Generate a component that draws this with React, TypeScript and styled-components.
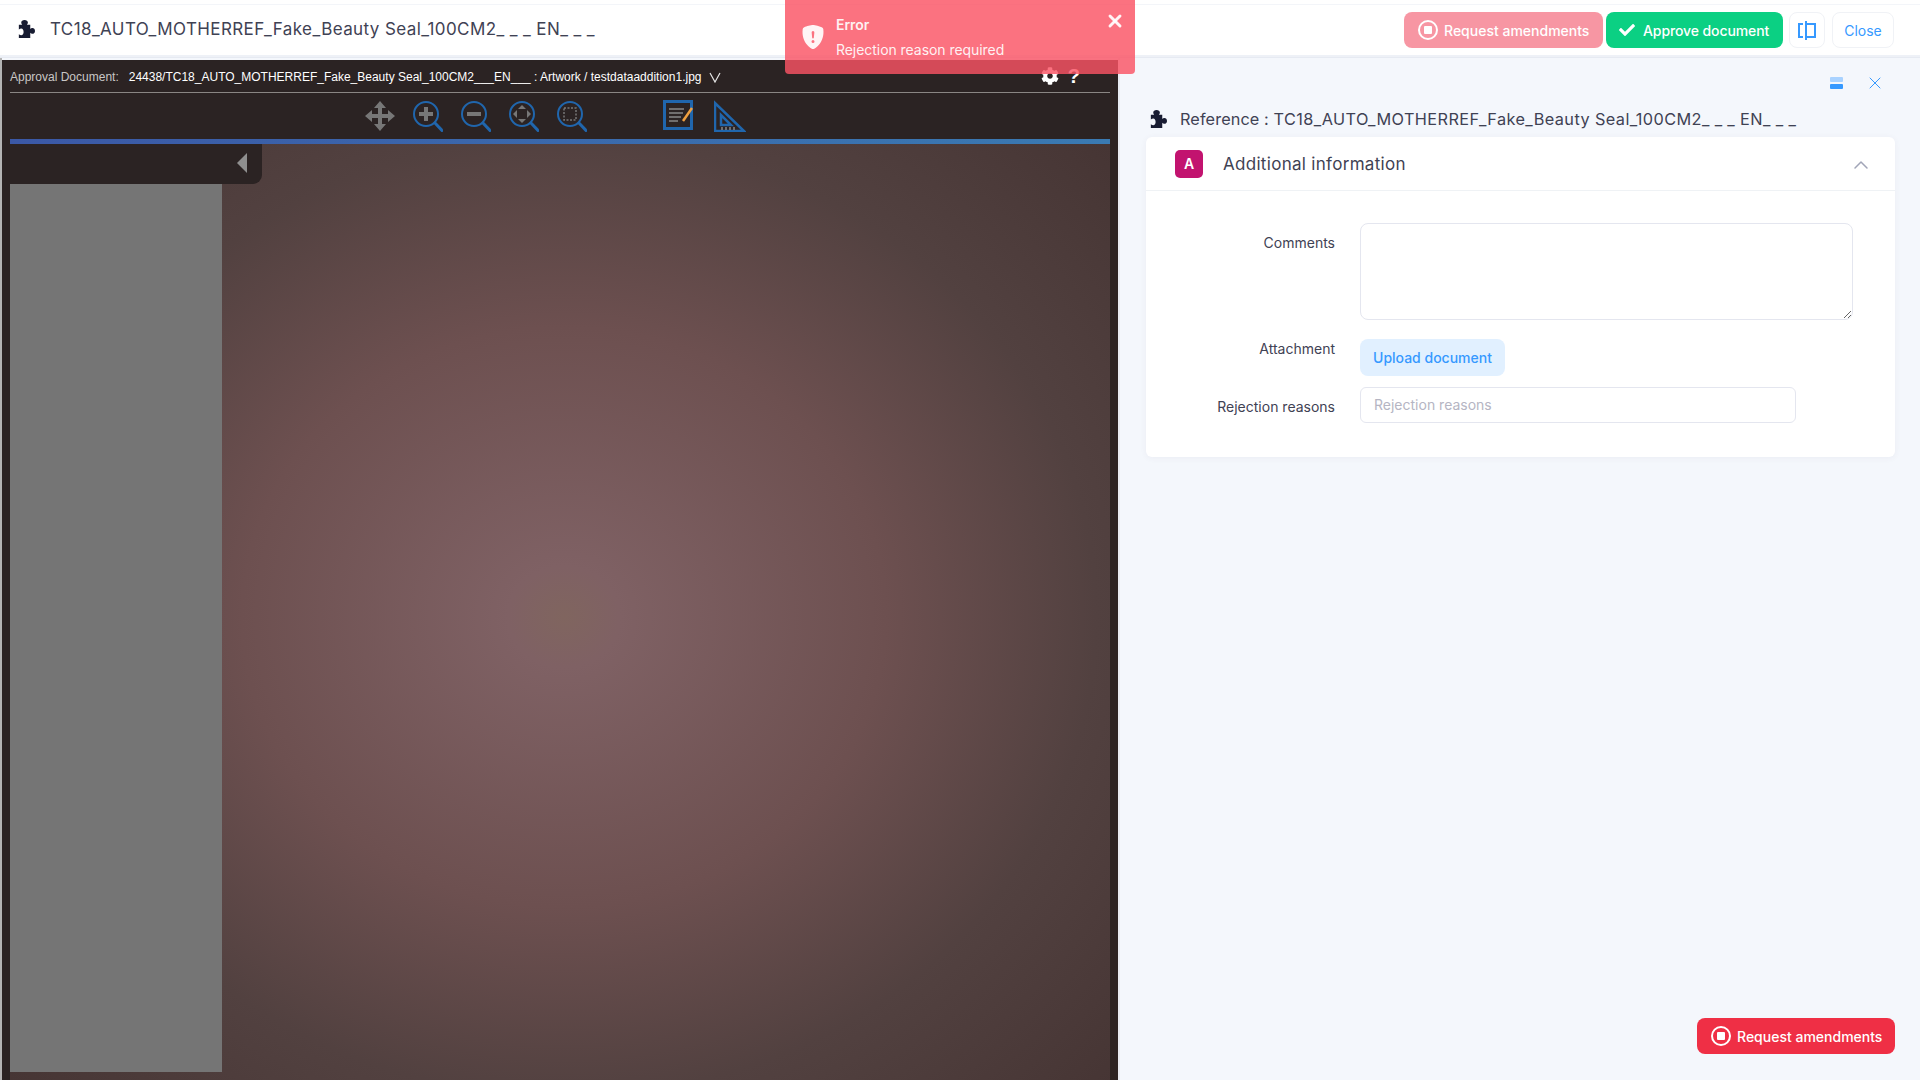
import type { ReactNode } from "react";
import styled, { createGlobalStyle } from "styled-components";
import { BsShieldFillExclamation } from "react-icons/bs";
import { FaCheck, FaCog } from "react-icons/fa";
import { FiChevronUp, FiX } from "react-icons/fi";

const GlobalStyle = createGlobalStyle`
  html, body { margin: 0; padding: 0; }
  body { font-family: Inter, "Open Sans", sans-serif; color: #3f4254; overflow: hidden; }
  * { box-sizing: border-box; }
`;

const Page = styled.div`
  position: relative;
  width: 1920px;
  height: 1080px;
  display: flex;
  flex-direction: column;
  background: #f4f7fc;
  overflow: hidden;
`;

const Header = styled.header`
  height: 58px;
  flex: none;
  display: flex;
  align-items: center;
  justify-content: space-between;
  padding: 6px 26px 3px 16px;
  background: linear-gradient(#fff 4px, #f3f5f9 4px, #f3f5f9 5px, #fff 5px, #fff 55px, #eef1f7 55px);
  border-bottom: 1px solid #e6eaf2;
`;

const TitleGroup = styled.div`
  display: flex;
  align-items: center;
  gap: 15px;
  padding-bottom: 2px;
`;

const TitleText = styled.span<{ $size: number }>`
  font-size: ${(p) => p.$size}px;
  color: #3f4254;
  white-space: pre;
  letter-spacing: 0.4px;
`;

const TitlePrefix = styled.span`
  letter-spacing: 0.1px;
`;

const Blanks = styled.span`
  letter-spacing: 0.325em;
`;

const Actions = styled.div`
  display: flex;
  align-items: center;
`;

const ColorButton = styled.button<{ $bg: string; $w: number; $faded?: boolean; $pad: number }>`
  height: 36px;
  width: ${(p) => p.$w}px;
  display: flex;
  align-items: center;
  gap: 5px;
  padding: 0 0 0 ${(p) => p.$pad}px;
  border: 0;
  border-radius: 8px;
  background: ${(p) => p.$bg};
  opacity: ${(p) => (p.$faded ? 0.5 : 1)};
  color: #fff;
  font: 500 14px Inter, sans-serif;
  white-space: nowrap;
`;

const ApproveButton = styled(ColorButton)`
  margin-left: 3px;
  gap: 8px;
  letter-spacing: -0.1px;
`;

const OutlineButton = styled.button<{ $w: number; $gap: number }>`
  height: 36px;
  width: ${(p) => p.$w}px;
  margin-left: ${(p) => p.$gap}px;
  display: flex;
  align-items: center;
  justify-content: center;
  padding: 0;
  background: #fff;
  border: 1px solid #f0f2f6;
  border-radius: 8px;
  color: #3699ff;
  font: 400 14px Inter, sans-serif;
`;

const Workspace = styled.div`
  flex: 1;
  min-height: 0;
  display: flex;
`;

const ViewerColumn = styled.div`
  width: 1120px;
  flex: none;
  padding: 2px 0 0 2px;
  display: flex;
  background: linear-gradient(90deg, #b4b4b4 2px, transparent 2px);
  border-right: 2px solid #e7ebf3;
`;

const Viewer = styled.section`
  flex: 1;
  display: flex;
  flex-direction: column;
  padding: 0 8px;
  background: #2b2323;
`;

const DocBar = styled.div`
  height: 33px;
  flex: none;
  display: flex;
  align-items: center;
  padding-top: 2px;
  border-bottom: 1px solid #8a8684;
  font: 12px "Liberation Sans", Arial, sans-serif;
  color: #c9c7c6;
`;

const DocValue = styled.span`
  margin: 0 7px 0 10px;
  color: #fff;
  white-space: pre;
`;

const DocTools = styled.div`
  margin: -2px 30px 0 auto;
  display: flex;
  align-items: center;
  gap: 9px;
  color: #fff;
  font-size: 20px;
  font-weight: 700;
`;

const Toolbar = styled.div`
  height: 46px;
  flex: none;
  display: flex;
  align-items: center;
  gap: 18px;
  padding-left: 355px;
`;

const NoteSlot = styled.span`
  margin-left: 58px;
  display: flex;
  gap: 21px;
`;

const ProgressLine = styled.div`
  height: 5px;
  flex: none;
  background: linear-gradient(90deg, #3b58a6, #3a7ab2);
`;

const Stage = styled.div`
  flex: 1;
  min-height: 0;
  background: radial-gradient(
    ellipse 700px 630px at 554px 473px,
    #80655f 0%,
    #7f6164 8%,
    #6d5050 46%,
    #524140 76%,
    #463534 108%
  );
`;

const ThumbTab = styled.div`
  width: 252px;
  height: 40px;
  display: flex;
  align-items: center;
  justify-content: flex-end;
  padding: 0 15px 2px 0;
  background: #2b2323;
  border-bottom-right-radius: 9px;
`;

const ThumbArrow = styled.span`
  width: 0;
  height: 0;
  border-top: 10px solid transparent;
  border-bottom: 10px solid transparent;
  border-right: 10px solid #8f8f8f;
`;

const Sheet = styled.div`
  width: 212px;
  height: 888px;
  background: #757575;
`;

const SidePanel = styled.aside`
  position: relative;
  flex: 1;
  display: flex;
  flex-direction: column;
  padding: 0 25px 26px 26px;
`;

const PanelTools = styled.div`
  height: 49px;
  flex: none;
  display: flex;
  align-items: center;
  justify-content: flex-end;
  gap: 22px;
  padding: 15px 10px 14px 0;
  color: #3699ff;
`;

const RefTitle = styled(TitleGroup)`
  height: 30px;
  flex: none;
  padding: 0 0 6px 2px;
  gap: 13px;
`;

const Card = styled.div`
  height: 320px;
  flex: none;
  background: #fff;
  border-radius: 6px;
  box-shadow: 0 1px 6px rgba(82, 63, 105, 0.06);
`;

const CardHead = styled.div`
  height: 54px;
  display: flex;
  align-items: center;
  padding: 0 22px 0 29px;
  border-bottom: 1px solid #eff2f5;
`;

const Badge = styled.span`
  width: 28px;
  height: 28px;
  display: flex;
  align-items: center;
  justify-content: center;
  background: #c2136f;
  border-radius: 5px;
  color: #fff;
  font-size: 14px;
  font-weight: 600;
`;

const CardTitle = styled.h3`
  flex: 1;
  margin: 0 0 0 20px;
  font-size: 17px;
  font-weight: 400;
  letter-spacing: 0.3px;
  color: #3f4254;
`;

const CardBody = styled.div`
  display: grid;
  grid-template-columns: 189px 1fr;
  column-gap: 25px;
  padding: 32px 41px 0 0;
`;

const FieldLabel = styled.label<{ $top: number }>`
  padding-top: ${(p) => p.$top}px;
  text-align: right;
  font-size: 14px;
  color: #3f4254;
  white-space: nowrap;
`;

const CommentBox = styled.textarea`
  display: block;
  width: 493px;
  height: 97px;
  margin-bottom: 19px;
  border: 1px solid #e4e6ef;
  border-radius: 8px;
  background: #fff;
`;

const UploadButton = styled.button`
  display: block;
  width: 145px;
  height: 37px;
  margin-bottom: 11px;
  padding: 0;
  border: 0;
  border-radius: 8px;
  background: #e1f0ff;
  color: #3699ff;
  font: 500 14px Inter, sans-serif;
`;

const TextBox = styled.input`
  display: block;
  width: 436px;
  height: 36px;
  padding: 0 13px 2px;
  border: 1px solid #e4e6ef;
  border-radius: 6px;
  font: 400 14px Inter, sans-serif;
  &::placeholder { color: #b5b5c3; }
`;

const PanelFooter = styled.div`
  margin-top: auto;
  display: flex;
  justify-content: flex-end;
`;

const Toast = styled.div`
  position: absolute;
  left: 785px;
  top: 0;
  width: 350px;
  height: 74px;
  display: flex;
  gap: 11px;
  padding: 15px 16px 0;
  background: rgba(250, 83, 100, 0.82);
  border-radius: 0 0 4px 4px;
  color: rgba(255, 255, 255, 0.92);
  font-size: 14px;
`;

const ToastText = styled.div`
  display: flex;
  flex-direction: column;
  gap: 5px;
  flex: 1;
  line-height: 20px;
  letter-spacing: -0.05px;
  strong { font-weight: 600; }
`;

const ToastClose = styled.span`
  margin: -4px -6px 0 0;
  font-size: 20px;
  line-height: 1;
`;

const ToolIcon = styled.svg`
  display: block;
  flex: none;
`;

const StopIcon = () => (
  <svg width="22" height="22" viewBox="0 0 22 22" fill="none">
    <circle cx="11" cy="11" r="9" stroke="#fff" strokeWidth="2" />
    <rect x="7" y="7" width="8" height="8" rx="1" fill="#fff" />
  </svg>
);

const PuzzleIcon = () => (
  <ToolIcon width="19" height="19" viewBox="0 0 20 20" fill="#181c32">
    <path d="M3 5h3.5c-.8-.8-1-1.6-1-2.3C5.5 1.2 7 0 9 0s3.5 1.2 3.5 2.7c0 .7-.2 1.5-1 2.3H15v4.5c.8-.8 1.6-1 2.3-1 1.5 0 2.7 1.3 2.7 3s-1.2 3-2.7 3c-.7 0-1.5-.2-2.3-1V19H3v-4c.8.7 1.7 1 2.5 1 1.5 0 2.5-1.6 2.5-3.5S7 9 5.5 9c-.8 0-1.7.3-2.5 1z" />
  </ToolIcon>
);

const Lens = ({ children }: { children?: ReactNode }) => (
  <ToolIcon width="30" height="31" viewBox="0 0 30 31" fill="none">
    <circle cx="13" cy="13" r="12" stroke="#2066ad" strokeWidth="2" />
    <path d="M21.5 21.5 L30 30.5" stroke="#2066ad" strokeWidth="3" />
    {children}
  </ToolIcon>
);

const DocumentName = ({ prefix, size }: { prefix?: string; size: number }) => (
  <TitleText $size={size}>
    {prefix && <TitlePrefix>{prefix}</TitlePrefix>}
    TC18_AUTO_MOTHERREF_Fake_Beauty Seal_100CM2
    <Blanks>___</Blanks>
    EN
    <Blanks>___</Blanks>
  </TitleText>
);

export default function App() {
  return (
    <Page>
      <GlobalStyle />
      <Header>
        <TitleGroup>
          <PuzzleIcon />
          <DocumentName size={17} />
        </TitleGroup>
        <Actions>
          <ColorButton $bg="#f1304a" $w={199} $pad={13} $faded>
            <StopIcon />
            Request amendments
          </ColorButton>
          <ApproveButton $bg="#0bd083" $w={177} $pad={13}>
            <FaCheck size={16} />
            Approve document
          </ApproveButton>
          <OutlineButton $w={36} $gap={6}>
            <svg width="18" height="19" viewBox="0 0 18 19" fill="none" stroke="#3699ff" strokeWidth="2">
              <path d="M5 3H1V16H5" />
              <path d="M8 0V19" />
              <path d="M8 3H17V16H8" />
            </svg>
          </OutlineButton>
          <OutlineButton $w={62} $gap={7}>Close</OutlineButton>
        </Actions>
      </Header>
      <Workspace>
        <ViewerColumn>
          <Viewer>
            <DocBar>
              Approval Document:
              <DocValue>24438/TC18_AUTO_MOTHERREF_Fake_Beauty Seal_100CM2___EN___ : Artwork / testdataaddition1.jpg</DocValue>
              <svg width="12" height="11" viewBox="0 0 12 11" fill="none" stroke="#e8e8e8" strokeWidth="1.2">
                <path d="M1 1L6 10L11 1" />
              </svg>
              <DocTools>
                <FaCog size={18} />
                ?
              </DocTools>
            </DocBar>
            <Toolbar>
              <ToolIcon width="30" height="30" viewBox="0 0 30 30" fill="#777">
                <path d="M15 0l6 7h-4v6h6V9l7 6-7 6v-4h-6v6h4l-6 7-6-7h4v-6H7v4l-7-6 7-6v4h6V7H9z" />
              </ToolIcon>
              <Lens>
                <path d="M6 13H20M13 6V20" stroke="#777" strokeWidth="4" />
              </Lens>
              <Lens>
                <path d="M6 13H20" stroke="#777" strokeWidth="4" />
              </Lens>
              <Lens>
                <path d="M13 4l4 4H9zM13 22l4-4H9zM4 13l4-4v8zM22 13l-4-4v8z" fill="#777" />
              </Lens>
              <Lens>
                <rect x="7" y="7" width="12" height="12" stroke="#777" strokeWidth="1.5" strokeDasharray="2 1.5" />
              </Lens>
              <NoteSlot>
                <ToolIcon width="30" height="30" viewBox="0 0 30 30" fill="none">
                  <rect x="1.5" y="1.5" width="27" height="27" stroke="#2066ad" strokeWidth="3" />
                  <path d="M6 9H21M6 13H20M6 17H18M6 21H15" stroke="#888" strokeWidth="1.5" />
                  <path d="M29 8L20 21" stroke="#f0a040" strokeWidth="2.5" />
                </ToolIcon>
                <ToolIcon width="32" height="32" viewBox="0 0 32 32" fill="none">
                  <path d="M1 3V31H30z" stroke="#2066ad" strokeWidth="2.5" />
                  <path d="M7 15V25H17z" stroke="#2066ad" strokeWidth="2.5" />
                  <path d="M8 30v-3M12 30v-3M16 30v-3M20 30v-3" stroke="#888" strokeWidth="1.5" />
                </ToolIcon>
              </NoteSlot>
            </Toolbar>
            <ProgressLine />
            <Stage>
              <ThumbTab>
                <ThumbArrow />
              </ThumbTab>
              <Sheet />
            </Stage>
          </Viewer>
        </ViewerColumn>
        <SidePanel>
          <PanelTools>
            <svg width="13" height="12" viewBox="0 0 13 12">
              <rect width="13" height="5" rx="1" fill="#a9d2ff" />
              <rect y="7" width="13" height="5" rx="1" fill="#3699ff" />
            </svg>
            <FiX size={20} strokeWidth={1.2} />
          </PanelTools>
          <RefTitle>
            <PuzzleIcon />
            <DocumentName prefix="Reference : " size={16.3} />
          </RefTitle>
          <Card>
            <CardHead>
              <Badge>A</Badge>
              <CardTitle>Additional information</CardTitle>
              <FiChevronUp size={24} color="#a1a5b7" strokeWidth={1.5} style={{ marginTop: 3 }} />
            </CardHead>
            <CardBody>
              <FieldLabel $top={11}>Comments</FieldLabel>
              <div>
                <CommentBox />
              </div>
              <FieldLabel $top={1}>Attachment</FieldLabel>
              <div>
                <UploadButton>Upload document</UploadButton>
              </div>
              <FieldLabel $top={11}>Rejection reasons</FieldLabel>
              <div>
                <TextBox placeholder="Rejection reasons" />
              </div>
            </CardBody>
          </Card>
          <PanelFooter>
            <ColorButton $bg="#ef2f45" $w={198} $pad={13}>
              <StopIcon />
              Request amendments
            </ColorButton>
          </PanelFooter>
        </SidePanel>
      </Workspace>
      <Toast>
        <BsShieldFillExclamation size={24} style={{ marginTop: 10 }} />
        <ToastText>
          <strong>Error</strong>
          <span>Rejection reason required</span>
        </ToastText>
        <ToastClose>
          <FiX strokeWidth={3.5} />
        </ToastClose>
      </Toast>
    </Page>
  );
}
